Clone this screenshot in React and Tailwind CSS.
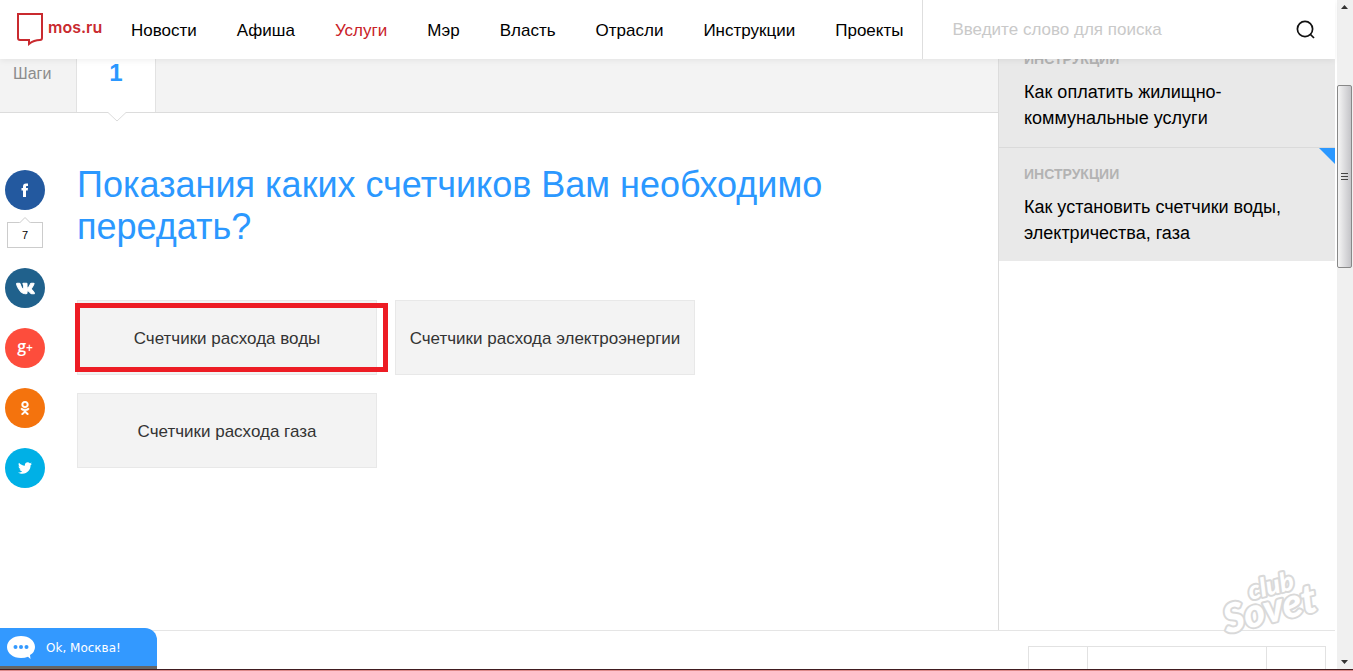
import { FaOdnoklassniki, FaTwitter, FaVk } from 'react-icons/fa'

const navItems = ['Новости', 'Афиша', 'Услуги', 'Мэр', 'Власть', 'Отрасли', 'Инструкции', 'Проекты']

const instructions = [
  { title: 'Как оплатить жилищно-коммунальные услуги', marked: false },
  { title: 'Как установить счетчики воды, электричества, газа', marked: true },
]

const meters = [
  { title: 'Счетчики расхода воды', highlighted: true },
  { title: 'Счетчики расхода электроэнергии' },
  { title: 'Счетчики расхода газа' },
]

function Logo() {
  return (
    <a href="#" className="flex w-[131px] shrink-0 pl-4 text-[#c92a2f]">
      <svg width="28" height="34" viewBox="0 0 28 34" fill="none" stroke="currentColor" strokeWidth="2" className="mt-3">
        <path d="M2 2h24v24q0 2-2 2-6 0-11 4v-4H4q-2 0-2-2z" />
      </svg>
      <span className="mt-[15px] ml-1 font-['Inter',sans-serif] text-[16px] leading-6 font-semibold">mos.ru</span>
    </a>
  )
}

function Header() {
  return (
    <header className="relative z-10 flex h-[59px] shrink-0 bg-white shadow-[0_2px_6px_rgba(0,0,0,0.06)]">
      <Logo />
      <nav className="flex items-center gap-10 pt-0.5 pr-[19px] text-[17px] whitespace-nowrap">
        {navItems.map(item => (
          <a key={item} href="#" className={item === 'Услуги' ? 'text-[#c92127]' : 'text-black'}>
            {item}
          </a>
        ))}
      </nav>
      <form className="flex min-w-0 flex-1 items-center border-l border-[#dedede] pr-5 pl-[29px]">
        <input
          type="search"
          aria-label="Поиск"
          placeholder="Введите слово для поиска"
          className="min-w-0 flex-1 text-[17px] outline-none placeholder:text-[#c9c9c9]"
        />
        <button type="button" aria-label="Найти">
          <svg width="20" height="20" viewBox="0 0 20 20" fill="none" stroke="#111" strokeWidth="1.7">
            <circle cx="10" cy="9" r="7.6" />
            <path d="m15 14 4 4" />
          </svg>
        </button>
      </form>
    </header>
  )
}

function Steps() {
  return (
    <div className="flex h-[54px] shrink-0 border-b border-[#dcdcdc] bg-[#f3f3f3]">
      <span className="w-[76px] pt-[5px] pl-[13px] text-[16px] leading-5 text-[#8c8c8c]">Шаги</span>
      <div className="relative w-20 border-x border-[#e2e2e2] bg-white text-center">
        <span className="text-[24px] leading-7 font-bold text-[#2b98ff]">1</span>
        <svg width="18" height="11" viewBox="0 0 18 11" className="absolute top-[52px] left-[31px]">
          <path d="M0 0v1.500l9 8.500 9-8.500V0z" fill="#fff" />
          <path d="m0 1.500 9 8.500 9-8.500" fill="none" stroke="#dcdcdc" />
        </svg>
      </div>
    </div>
  )
}

function ShareButton({ label, color, children }) {
  return (
    <button type="button" aria-label={label} className={`flex size-10 items-center justify-center rounded-full text-white ${color}`}>
      {children}
    </button>
  )
}

function ShareBar() {
  return (
    <div className="flex w-[77px] shrink-0 flex-col gap-5 pt-[57px] pl-[5px]">
      <div>
        <ShareButton label="Facebook" color="bg-[#23599f]">
          <svg width="8" height="14" viewBox="0 0 8 14" fill="currentColor">
            <path d="M2 14V7.500H.5V5H2V3.500Q2 .5 5 .5h2V3H5.600Q5 3 5 3.700V5h2l-.3 2.500H5V14z" />
          </svg>
        </ShareButton>
        <div className="relative mt-3 ml-0.5 h-[26px] w-9 border border-[#ccc] bg-white text-center text-[11px] leading-6">
          7
          <svg width="12" height="6" viewBox="0 0 12 6" className="absolute -top-1.5 left-[11px]">
            <path d="m0 6 6-5.500L12 6z" fill="#fff" />
            <path d="m.5 6L6 .5 11.500 6" fill="none" stroke="#ccc" />
          </svg>
        </div>
      </div>
      <ShareButton label="ВКонтакте" color="bg-[#20618c]"><FaVk size={19} strokeWidth={32} /></ShareButton>
      <ShareButton label="Google+" color="bg-[#fd4d3c]">
        <span className="pb-0.5 font-['Open_Sans',sans-serif] text-[16px] leading-5 font-semibold">
          g<span className="text-[12px]">+</span>
        </span>
      </ShareButton>
      <ShareButton label="Одноклассники" color="bg-[#f4730d]"><FaOdnoklassniki size={14} strokeWidth={10} /></ShareButton>
      <ShareButton label="Twitter" color="bg-[#00b0e6]"><FaTwitter size={14} /></ShareButton>
    </div>
  )
}

function MeterButton({ meter }) {
  return (
    <div className="relative w-[300px]">
      <button type="button" className="h-[75px] w-full border border-[#e8e8e8] bg-[#f3f3f3] pt-0.5 text-[17px] text-[#333]">
        {meter.title}
      </button>
      {meter.highlighted && (
        <div className="pointer-events-none absolute top-[3px] -right-[11px] bottom-[3px] -left-0.5 border-[5px] border-[#ed1c24]" />
      )}
    </div>
  )
}

function Sidebar() {
  return (
    <aside className="w-[337px] shrink-0 overflow-hidden border-l border-[#dcdcdc]">
      <div className="-mt-[26px]">
        {instructions.map(item => (
          <a key={item.title} href="#" className="relative block border-b border-[#dadada] bg-[#e9e9e9] pt-4 pr-10 pb-4 pl-[25px] last:border-b-0 last:pb-[15px]">
            {item.marked && <span className="absolute top-0 right-0 size-4 bg-[#2b98ff] [clip-path:polygon(0_0,100%_0,100%_100%)]" />}
            <h3 className="text-[14px] leading-5 font-bold text-[#b3b3b3] uppercase">Инструкции</h3>
            <p className="mt-2.5 text-[18px] leading-[26px] text-black">{item.title}</p>
          </a>
        ))}
      </div>
    </aside>
  )
}

function Watermark() {
  return (
    <svg
      width="104"
      height="76"
      viewBox="0 0 104 76"
      className="absolute right-2 bottom-8 z-10 overflow-visible"
      fontFamily="Lato, sans-serif"
      fontStyle="italic"
      fontWeight="900"
      fill="#fff"
      stroke="#d9d9d9"
      strokeWidth="4"
      strokeLinejoin="round"
      paintOrder="stroke"
      aria-hidden="true"
    >
      <g transform="rotate(-14 52 38)">
        <text x="-3" y="60" fontSize="40">Sovet</text>
        <text x="28" y="33" fontSize="26">club</text>
      </g>
    </svg>
  )
}

function Footer() {
  return (
    <footer className="flex h-[39px] shrink-0 items-end justify-between border-t border-[#e5e5e5]">
      <button type="button" className="-mt-1 flex h-[41px] w-[157px] items-center gap-[11px] rounded-tr-xl border-b-[3px] border-[#666] bg-[#3399ff] pt-0.5 pl-[7px] font-['DejaVu_Sans',sans-serif] text-[12px] text-white">
        <svg width="28" height="24" viewBox="0 0 28 24">
          <path d="M14 0C6 0 0 4.800 0 11s6 11 14 11q4 0 7-1.300l2.500 2.300-.5-4Q28 16 28 11C28 4.800 22 0 14 0" fill="#fff" />
          <g fill="#3399ff">
            <circle cx="8.500" cy="11" r="2" />
            <circle cx="14" cy="11" r="2" />
            <circle cx="19.500" cy="11" r="2" />
          </g>
        </svg>
        Ok, Москва!
      </button>
      <div className="mr-[9px] flex h-[23px] w-[298px] border border-b-0 border-[#e2e2e2]">
        <div className="w-[59px] border-r border-[#e2e2e2]" />
        <div className="flex-1" />
        <div className="w-[59px] border-l border-[#e2e2e2]" />
      </div>
    </footer>
  )
}

function Scrollbar() {
  return (
    <div className="ml-0.5 flex w-4 shrink-0 flex-col items-center bg-[#f0f0f0] pr-px">
      <svg width="7" height="4" viewBox="0 0 7 4" className="mt-[5px]"><path d="M0 4 3.500 0 7 4z" fill="#333" /></svg>
      <div className="mt-[76px] flex h-[183px] w-[15px] flex-col items-center justify-center gap-0.5 rounded-xs border border-[#888] bg-linear-to-r from-[#f5f5f5] to-[#c4c4c8]">
        <i className="h-px w-[7px] bg-[#444]" />
        <i className="h-px w-[7px] bg-[#444]" />
        <i className="h-px w-[7px] bg-[#444]" />
      </div>
      <svg width="7" height="4" viewBox="0 0 7 4" className="mt-auto mb-[5px]"><path d="M0 0l3.500 4L7 0z" fill="#333" /></svg>
    </div>
  )
}

export default function App() {
  return (
    <div className="flex h-screen flex-col overflow-hidden bg-white font-['Liberation_Sans',Arial,sans-serif]">
      <div className="flex min-h-0 flex-1">
        <div className="relative flex min-w-0 flex-1 flex-col">
          <Header />
          <div className="flex min-h-0 flex-1">
            <main className="flex min-w-0 flex-1 flex-col">
              <Steps />
              <div className="flex">
                <ShareBar />
                <section className="min-w-0 flex-1 pt-[51px] pr-10">
                  <h1 className="max-w-[800px] text-[36px] leading-[42px] text-[#2b98ff]">
                    Показания каких счетчиков Вам необходимо передать?
                  </h1>
                  <div className="mt-[52px] flex max-w-[640px] flex-wrap gap-[18px]">
                    {meters.map(meter => <MeterButton key={meter.title} meter={meter} />)}
                  </div>
                </section>
              </div>
            </main>
            <Sidebar />
          </div>
          <Footer />
          <Watermark />
        </div>
        <Scrollbar />
      </div>
      <div className="h-0.5 shrink-0 border-t border-[#401c20] bg-[#d88]" />
    </div>
  )
}
